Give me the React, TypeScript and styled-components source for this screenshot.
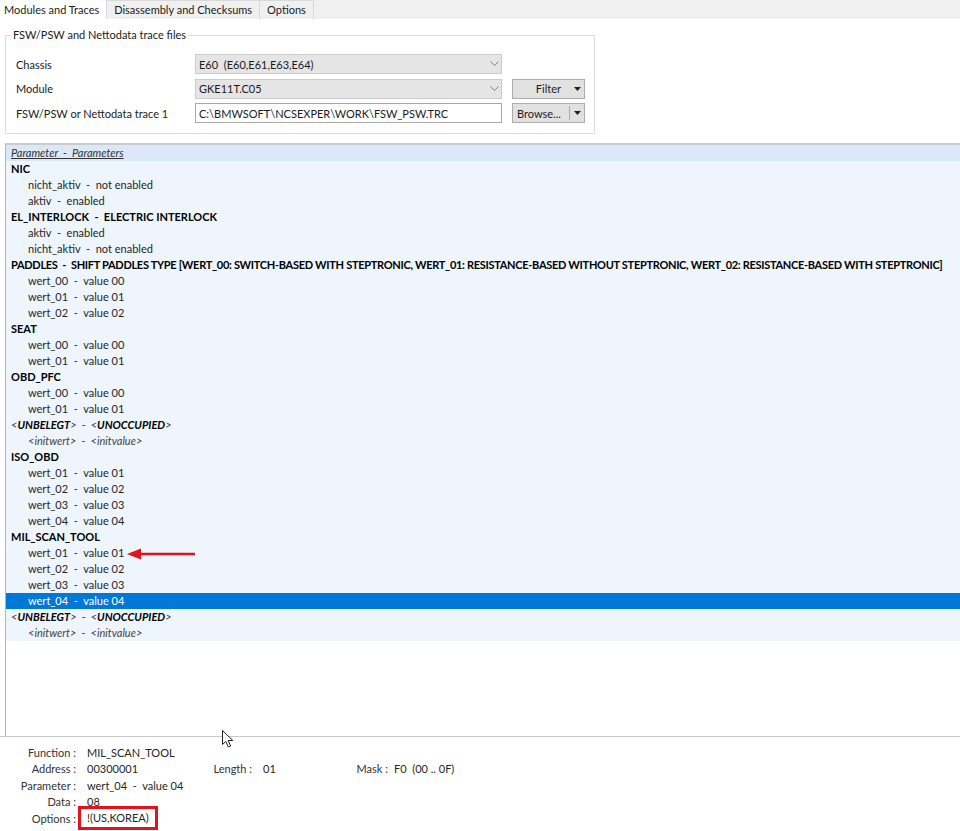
import React from 'react'
import styled, { createGlobalStyle } from 'styled-components'

const GlobalStyle = createGlobalStyle`
  html, body {
    margin: 0;
    padding: 0;
    background: #fff;
  }
  body {
    font-family: Lato, "Noto Sans", sans-serif;
    font-size: 11px;
    color: #1b1b1b;
  }
  * {
    box-sizing: border-box;
  }
`

const Page = styled.div`
  position: relative;
  width: 960px;
  height: 831px;
  display: flex;
  flex-direction: column;
  overflow: hidden;
`

const TabBar = styled.div`
  flex: none;
  display: flex;
  height: 19px;
  background: #f0f0f0;
`

const Tab = styled.div<{ $active?: boolean }>`
  height: 19px;
  line-height: 18px;
  white-space: nowrap;
  padding: ${({ $active }) => ($active ? '0 7px 0 4px' : '0 7px')};
  background: ${({ $active }) => ($active ? '#fff' : '#f0f0f0')};
  border: 1px solid ${({ $active }) => ($active ? '#fff' : '#d9d9d9')};
  border-bottom: none;
  margin-left: -1px;
`

const TopSection = styled.div`
  flex: none;
  height: 124px;
  padding: 9px 0 0 5px;
  background: #fff;
`

const GroupBox = styled.fieldset`
  width: 590px;
  margin: 0;
  padding: 12px 9px 10px 10px;
  border: 1px solid #dcdcdc;
`

const Legend = styled.legend`
  margin-left: -5px;
  padding: 0 2px;
  line-height: 14px;
`

const FieldGrid = styled.div`
  display: grid;
  grid-template-columns: 169px 307px 73px;
  grid-auto-rows: 20px;
  column-gap: 10px;
  row-gap: 4.5px;
  align-items: center;
`

const FieldLabel = styled.div`
  grid-column: 1;
`

const Combo = styled.div`
  grid-column: 2;
  height: 20px;
  display: flex;
  align-items: center;
  justify-content: space-between;
  padding: 0 2px 0 3px;
  background: #e5e5e5;
  border: 1px solid #cbcbcb;
`

const TextField = styled.div`
  grid-column: 2;
  height: 20px;
  display: flex;
  align-items: center;
  padding: 0 3px;
  background: #fff;
  border: 1px solid #a9a9a9;
`

const Button = styled.div`
  grid-column: 3;
  height: 20px;
  display: flex;
  align-items: center;
  background: #e1e1e1;
  border: 1px solid #adadad;
`

const ButtonLabel = styled.span<{ $align: 'left' | 'right' }>`
  flex: 1;
  text-align: ${({ $align }) => $align};
  padding: ${({ $align }) => ($align === 'right' ? '0 8px 0 0' : '0 0 0 4px')};
`

const ArrowSlot = styled.span<{ $split?: boolean }>`
  width: 15px;
  height: 14px;
  display: flex;
  align-items: center;
  justify-content: center;
  border-left: 1px solid ${({ $split }) => ($split ? '#adadad' : 'transparent')};
`

const ListPanel = styled.div`
  flex: 1;
  margin-left: 5px;
  border-top: 2px solid #cbcbcb;
  border-left: 1px solid #b4b4b4;
  background: #fff;
  overflow: hidden;
`

const ListHeader = styled.div`
  height: 16px;
  line-height: 16px;
  padding-left: 5px;
  background: #dbe8f9;
  color: #333;
  font-style: italic;
  text-decoration: underline;
  white-space: pre;
`

const Row = styled.div<{ $child?: boolean; $selected?: boolean; $tight?: boolean }>`
  height: 16px;
  line-height: 16px;
  padding-left: ${({ $child }) => ($child ? '22px' : '5px')};
  background: ${({ $selected }) => ($selected ? '#0078d7' : '#eef5fd')};
  color: ${({ $selected, $child }) =>
    $selected ? '#fff' : $child ? '#262626' : '#000'};
  font-weight: ${({ $child }) => ($child ? 400 : 700)};
  letter-spacing: ${({ $tight }) => ($tight ? '-0.3px' : 'normal')};
  white-space: pre;
`

const Placeholder = styled.span<{ $strong?: boolean }>`
  font-style: italic;
  font-weight: ${({ $strong }) => ($strong ? 700 : 400)};
  color: ${({ $strong }) => ($strong ? '#000' : '#444')};
`

const DetailsPanel = styled.div`
  flex: none;
  height: 95px;
  padding-top: 7px;
  border-top: 1px solid #c8c8c8;
  background: #fff;
`

const DetailRow = styled.div`
  display: grid;
  grid-template-columns: 76px 136px 40px 102px 34px 1fr;
  grid-template-rows: 16.5px;
  align-items: center;
  white-space: pre;
`

const DetailLabel = styled.span`
  text-align: right;
  color: #333;
`

const DetailValue = styled.span<{ $pad?: number }>`
  padding-left: ${({ $pad }) => $pad ?? 11}px;
  color: #262626;
`

const Flagged = styled.span`
  display: block;
  width: fit-content;
  margin: -4px 0 -4px -9px;
  padding: 1px 6px;
  line-height: 16px;
  border: 3px solid #e3121b;
`

const Overlay = styled.svg`
  position: absolute;
  pointer-events: none;
`

const Chevron = () => (
  <svg width="9" height="6" viewBox="0 0 9 6">
    <polyline points="0.5,0.5 4.5,4.5 8.5,0.5" fill="none" stroke="#808080" strokeWidth="1" />
  </svg>
)

const DropTriangle = () => (
  <svg width="7" height="4" viewBox="0 0 7 4">
    <polygon points="0,0 7,0 3.5,4" fill="#222" />
  </svg>
)

type Entry = {
  name: string
  desc?: string
  child?: boolean
  placeholder?: boolean
  selected?: boolean
}

const values = (ids: string[], selected?: string): Entry[] =>
  ids.map((id) => ({
    name: `wert_${id}`,
    desc: `value ${id}`,
    child: true,
    selected: id === selected,
  }))

const unused: Entry[] = [
  { name: 'UNBELEGT', desc: 'UNOCCUPIED', placeholder: true },
  { name: 'initwert', desc: 'initvalue', placeholder: true, child: true },
]

const entries: Entry[] = [
  { name: 'NIC' },
  { name: 'nicht_aktiv', desc: 'not enabled', child: true },
  { name: 'aktiv', desc: 'enabled', child: true },
  { name: 'EL_INTERLOCK', desc: 'ELECTRIC INTERLOCK' },
  { name: 'aktiv', desc: 'enabled', child: true },
  { name: 'nicht_aktiv', desc: 'not enabled', child: true },
  {
    name: 'PADDLES',
    desc:
      'SHIFT PADDLES TYPE [WERT_00: SWITCH-BASED WITH STEPTRONIC, WERT_01: RESISTANCE-BASED WITHOUT STEPTRONIC, WERT_02: RESISTANCE-BASED WITH STEPTRONIC]',
  },
  ...values(['00', '01', '02']),
  { name: 'SEAT' },
  ...values(['00', '01']),
  { name: 'OBD_PFC' },
  ...values(['00', '01']),
  ...unused,
  { name: 'ISO_OBD' },
  ...values(['01', '02', '03', '04']),
  { name: 'MIL_SCAN_TOOL' },
  ...values(['01', '02', '03', '04'], '04'),
  ...unused,
]

const EntryRow: React.FC<{ entry: Entry }> = ({ entry }) => {
  const { name, desc, child, placeholder, selected } = entry
  if (placeholder) {
    return (
      <Row $child={child}>
        <Placeholder>&lt;</Placeholder>
        <Placeholder $strong={!child}>{name}</Placeholder>
        <Placeholder>&gt;  -  &lt;</Placeholder>
        <Placeholder $strong={!child}>{desc}</Placeholder>
        <Placeholder>&gt;</Placeholder>
      </Row>
    )
  }
  // long descriptions are squeezed a little so they fit the window
  const tight = !!desc && desc.length > 80
  return (
    <Row $child={child} $selected={selected} $tight={tight}>
      {desc ? `${name}  -  ${desc}` : name}
    </Row>
  )
}

export default function App() {
  return (
    <>
      <GlobalStyle />
      <Page>
        <TabBar>
          <Tab $active>Modules and Traces</Tab>
          <Tab>Disassembly and Checksums</Tab>
          <Tab>Options</Tab>
        </TabBar>

        <TopSection>
          <GroupBox>
            <Legend>FSW/PSW and Nettodata trace files</Legend>
            <FieldGrid>
              <FieldLabel>Chassis</FieldLabel>
              <Combo>
                <span style={{ whiteSpace: 'pre' }}>E60  (E60,E61,E63,E64)</span>
                <Chevron />
              </Combo>

              <FieldLabel>Module</FieldLabel>
              <Combo>
                <span>GKE11T.C05</span>
                <Chevron />
              </Combo>
              <Button>
                <ButtonLabel $align="right">Filter</ButtonLabel>
                <ArrowSlot>
                  <DropTriangle />
                </ArrowSlot>
              </Button>

              <FieldLabel>FSW/PSW or Nettodata trace 1</FieldLabel>
              <TextField>C:\BMWSOFT\NCSEXPER\WORK\FSW_PSW.TRC</TextField>
              <Button>
                <ButtonLabel $align="left">Browse...</ButtonLabel>
                <ArrowSlot $split>
                  <DropTriangle />
                </ArrowSlot>
              </Button>
            </FieldGrid>
          </GroupBox>
        </TopSection>

        <ListPanel>
          <ListHeader>Parameter  -  Parameters</ListHeader>
          {entries.map((entry, i) => (
            <EntryRow key={i} entry={entry} />
          ))}
        </ListPanel>

        <DetailsPanel>
          <DetailRow>
            <DetailLabel>Function :</DetailLabel>
            <DetailValue>MIL_SCAN_TOOL</DetailValue>
          </DetailRow>
          <DetailRow>
            <DetailLabel>Address :</DetailLabel>
            <DetailValue>00300001</DetailValue>
            <DetailLabel>Length :</DetailLabel>
            <DetailValue>01</DetailValue>
            <DetailLabel>Mask :</DetailLabel>
            <DetailValue $pad={6}>F0  (00 .. 0F)</DetailValue>
          </DetailRow>
          <DetailRow>
            <DetailLabel>Parameter :</DetailLabel>
            <DetailValue>wert_04  -  value 04</DetailValue>
          </DetailRow>
          <DetailRow>
            <DetailLabel>Data :</DetailLabel>
            <DetailValue>08</DetailValue>
          </DetailRow>
          <DetailRow>
            <DetailLabel>Options :</DetailLabel>
            <DetailValue>
              <Flagged>!(US,KOREA)</Flagged>
            </DetailValue>
          </DetailRow>
        </DetailsPanel>

        <Overlay width="70" height="14" viewBox="0 0 70 14" style={{ left: 126, top: 547 }}>
          <line x1="12" y1="7" x2="69" y2="7" stroke="#e3121b" strokeWidth="2.6" />
          <polygon points="1,7 15,1.5 15,12.5" fill="#e3121b" />
        </Overlay>

        <Overlay width="13" height="19" viewBox="0 0 13 19" style={{ left: 222, top: 730 }}>
          <path
            d="M0.5 0.5 L0.5 14.5 L3.8 11.4 L6.3 17 L8.6 16 L6.2 10.5 L10.8 10.5 Z"
            fill="#fff"
            stroke="#222"
            strokeWidth="1"
            strokeLinejoin="round"
          />
        </Overlay>
      </Page>
    </>
  )
}
